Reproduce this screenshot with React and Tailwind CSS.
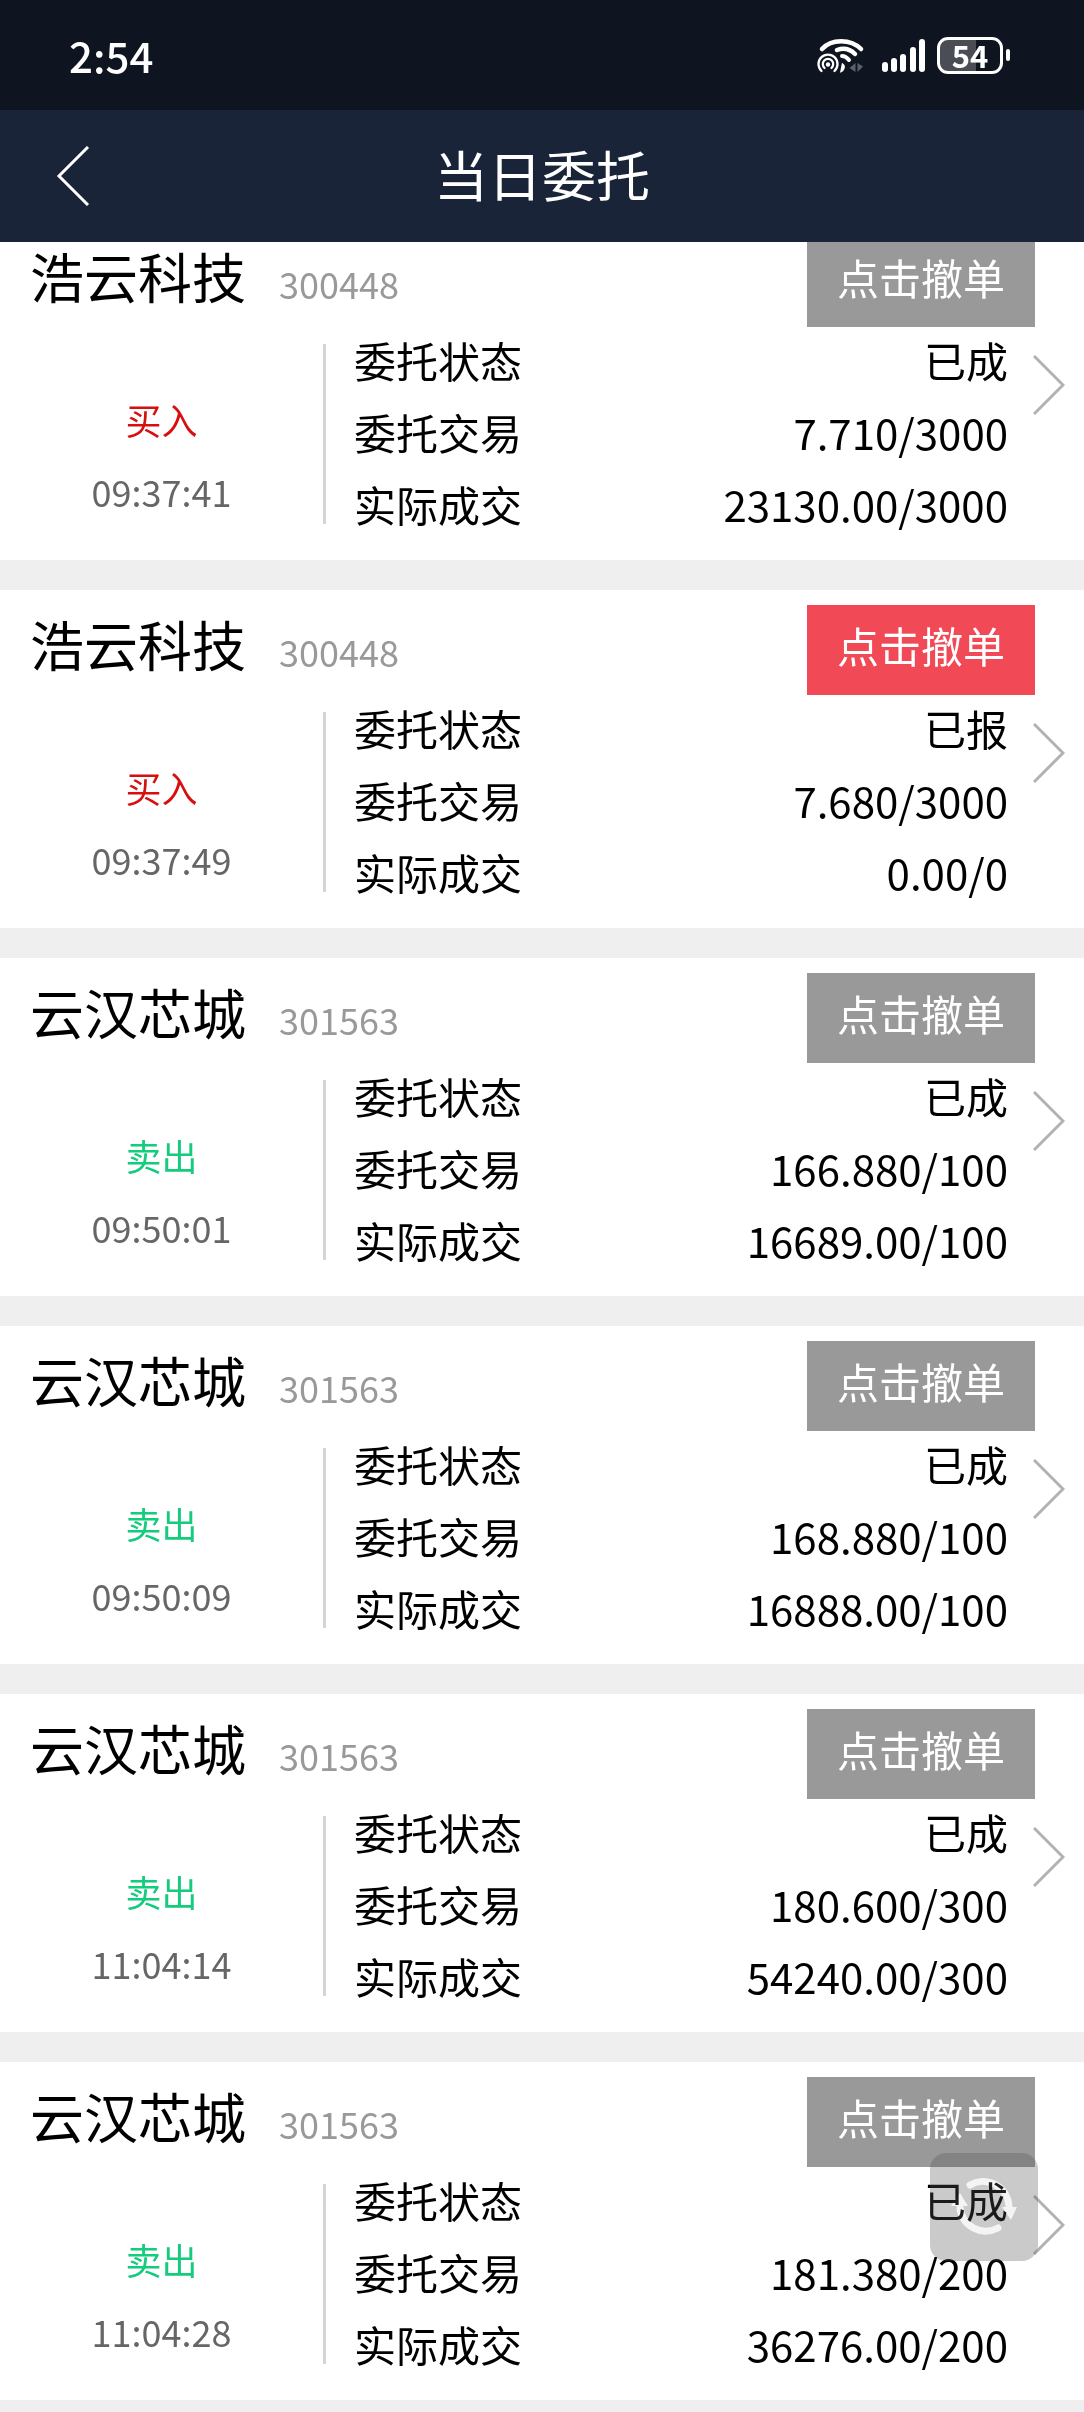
const ORDERS = [
  { name: '浩云科技', code: '300448', side: '买入', time: '09:37:41', status: '已成', order: '7.710/3000', deal: '23130.00/3000' },
  { name: '浩云科技', code: '300448', side: '买入', time: '09:37:49', status: '已报', order: '7.680/3000', deal: '0.00/0' },
  { name: '云汉芯城', code: '301563', side: '卖出', time: '09:50:01', status: '已成', order: '166.880/100', deal: '16689.00/100' },
  { name: '云汉芯城', code: '301563', side: '卖出', time: '09:50:09', status: '已成', order: '168.880/100', deal: '16888.00/100' },
  { name: '云汉芯城', code: '301563', side: '卖出', time: '11:04:14', status: '已成', order: '180.600/300', deal: '54240.00/300' },
  { name: '云汉芯城', code: '301563', side: '卖出', time: '11:04:28', status: '已成', order: '181.380/200', deal: '36276.00/200' },
]

function WifiIcon() {
  return (
    <svg width="48" height="36" viewBox="0 0 48 36" fill="none" stroke="#fff" strokeLinecap="round">
      <path d="M5 12C14 1.500 34 1.500 44 12" strokeWidth="4.500" />
      <path d="M20 13C27 10.500 33 12 38 17" strokeWidth="4.500" />
      <path d="M25 19C28 19 30 20.500 32 23" strokeWidth="4" />
      <path d="M25.500 27C28.500 29 27 33 24 34.500Z" fill="#fff" strokeWidth="1.500" />
      <g strokeWidth="2.300">
        <path d="M4.500 34A9.500 9.500 0 1 1 17.500 34" />
        <path d="M7.500 31A5.200 5.200 0 1 1 14.500 31" />
      </g>
      <circle cx="11" cy="27.500" r="2.200" fill="#fff" stroke="none" />
      <path d="M38.500 26V35L32.500 31ZM40.500 26V35L46 29.500Z" fill="#5b6069" stroke="none" />
    </svg>
  )
}

function SignalIcon() {
  return (
    <svg width="44" height="36" viewBox="0 0 44 36" fill="#fff">
      <rect x="0" y="25" width="6" height="10" rx="3" />
      <rect x="9" y="21" width="6" height="14" rx="3" />
      <rect x="18" y="17" width="6" height="18" rx="3" />
      <rect x="28" y="10" width="6" height="25" rx="3" />
      <rect x="37" y="2" width="6" height="33" rx="3" />
    </svg>
  )
}

function Battery() {
  return (
    <div className="flex items-center gap-[3px]">
      <div className="flex h-[37px] w-[66px] items-center justify-center rounded-[11px] border-[3px] border-white bg-linear-to-r from-[#4a4d55] from-60% to-[#0f1520] to-60%">
        <span className="pb-0.5 text-[31px] leading-none font-bold">54</span>
      </div>
      <span className="h-3 w-1 rounded-full bg-white" />
    </div>
  )
}

function StatusBar() {
  return (
    <div className="flex h-[110px] shrink-0 items-center justify-between bg-[#0f1520] pr-[74px] pl-[69px] text-white">
      <span className="text-[42px] leading-none font-medium">2:54</span>
      <div className="flex items-center">
        <WifiIcon />
        <div className="ml-[17px]"><SignalIcon /></div>
        <div className="ml-[11px]"><Battery /></div>
      </div>
    </div>
  )
}

function Header() {
  return (
    <header className="grid h-[132px] shrink-0 grid-cols-[1fr_auto_1fr] items-center bg-[#1a2438] text-white">
      <button type="button" aria-label="返回" className="ml-[55px] justify-self-start">
        <svg width="36" height="60" viewBox="0 0 36 60" fill="none" stroke="currentColor" strokeWidth="3">
          <path d="M33 1L4 30L33 59" />
        </svg>
      </button>
      <h1 className="pb-1 text-[54px] leading-[60px]">当日委托</h1>
    </header>
  )
}

function Field({ label, value }) {
  return (
    <div className="flex h-[72px] items-center justify-between pb-1.5">
      <dt>{label}</dt>
      <dd>{value}</dd>
    </div>
  )
}

function OrderCard({ order }) {
  const cancellable = order.status === '已报'
  return (
    <li className="h-[338px] shrink-0 bg-white">
      <div className="flex h-[105px] items-end justify-between pr-[49px] pl-[30px]">
        <div className="flex h-[90px] items-center gap-[33px] pb-3">
          <h2 className="text-[54px] leading-[60px]">{order.name}</h2>
          <span className="pt-3.5 text-[36px] leading-[54px] text-[#999]">{order.code}</span>
        </div>
        <button
          type="button"
          disabled={!cancellable}
          className={`h-[90px] w-[228px] pb-2.5 text-[42px] leading-[60px] text-white ${cancellable ? 'bg-[#f24957]' : 'bg-[#999]'}`}
        >
          点击撤单
        </button>
      </div>
      <div className="flex">
        <div className="flex w-[323px] flex-col items-center pt-14 text-[36px] leading-[72px]">
          <span className={order.side === '买入' ? 'text-[#d80f0f]' : 'text-[#14cc7c]'}>{order.side}</span>
          <time className="text-[#666]">{order.time}</time>
        </div>
        <div className="mt-[17px] h-[180px] w-[3px] bg-[#d5d5d5]" />
        <dl className="ml-7 flex-1 text-[42px] leading-[60px]">
          <Field label="委托状态" value={order.status} />
          <Field label="委托交易" value={order.order} />
          <Field label="实际成交" value={order.deal} />
        </dl>
        <svg className="mt-7 mr-[19px] ml-[25px]" width="32" height="60" viewBox="0 0 32 60" fill="none" stroke="#b2b2b2" strokeWidth="3">
          <path d="M1 1L30 30L1 59" />
        </svg>
      </div>
    </li>
  )
}

function RefreshButton() {
  return (
    <button
      type="button"
      aria-label="刷新"
      className="absolute right-[46px] bottom-[151px] flex size-[108px] items-center justify-center rounded-2xl bg-[#535353]/31"
    >
      <svg className="mix-blend-color-dodge" width="68" height="60" viewBox="0 0 68 60" fill="none" stroke="#2c2c2c" strokeWidth="7" strokeLinecap="round">
        <path d="M20 8A26 26 0 0 1 59 29" />
        <path d="M48 51A26 26 0 0 1 10 31" />
        <path d="M52 30H67L61 43ZM1 29H18L10 16Z" fill="#2c2c2c" stroke="none" />
      </svg>
    </button>
  )
}

export default function App() {
  return (
    <div className="relative flex h-screen flex-col overflow-hidden bg-[#efefef] font-['Noto_Sans_CJK_SC',sans-serif] text-black">
      <StatusBar />
      <Header />
      <main className="min-h-0 flex-1 overflow-hidden">
        <ul className="-mt-5 flex flex-col gap-[30px]">
          {ORDERS.map((order) => (
            <OrderCard key={order.time} order={order} />
          ))}
        </ul>
      </main>
      <RefreshButton />
    </div>
  )
}
